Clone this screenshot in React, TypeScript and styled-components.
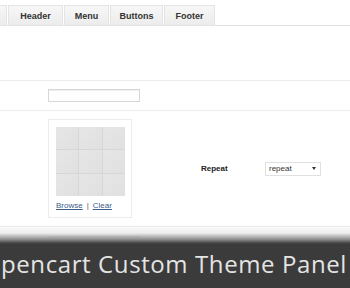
import React from 'react';
import styled, { createGlobalStyle } from 'styled-components';

const GlobalStyle = createGlobalStyle`
  html, body {
    margin: 0;
    padding: 0;
    background: #ffffff;
    overflow: hidden;
  }
  body {
    font-family: 'Liberation Sans', Arial, sans-serif;
  }
`;

const Page = styled.div`
  position: relative;
  width: 350px;
  height: 288px;
  overflow: hidden;
  background: #fff;
`;

const TabBar = styled.div`
  display: flex;
  margin-top: 5px;
  height: 20px;
  border-bottom: 1px solid #e2e2e2;
  margin-left: -47px;
`;

const Tab = styled.div<{ w: number }>`
  width: ${p => p.w}px;
  box-sizing: border-box;
  display: flex;
  align-items: center;
  justify-content: center;
  margin-right: 1px;
  background: linear-gradient(#f7f7f7, #ececec);
  border: 1px solid #e4e4e4;
  border-bottom: none;
  font-size: 9px;
  font-weight: bold;
  color: #333;
`;

const Form = styled.div`
  display: flex;
  flex-direction: column;
`;

const Row = styled.div<{ h: number; last?: boolean }>`
  display: flex;
  align-items: center;
  height: ${p => p.h}px;
  border-bottom: ${p => (p.last ? 'none' : '1px solid #ececec')};
  padding-left: 48px;
`;

const TextInput = styled.div`
  width: 92px;
  height: 13px;
  box-sizing: border-box;
  border: 1px solid #d6d6d6;
  box-shadow: inset 0 1px 1px #eee;
  background: #fff;
`;

const ImageBox = styled.div`
  width: 84px;
  height: 99px;
  box-sizing: border-box;
  border: 1px solid #ececec;
  padding: 7px 6px 0 7px;
  display: flex;
  flex-direction: column;
  align-items: flex-start;
`;

const Thumb = styled.div`
  width: 69px;
  height: 69px;
  display: grid;
  grid-template-columns: repeat(3, 1fr);
  grid-template-rows: repeat(3, 1fr);
  gap: 1px;
  background: #d6d6d6;
`;

const Cell = styled.div`
  background: linear-gradient(135deg, #e6e6e6, #e0e0e0);
`;

const Links = styled.div`
  margin-top: 5px;
  font-size: 8px;
  color: #555;
  display: flex;
  gap: 4px;
`;

const LinkText = styled.span`
  color: #3b5c8c;
  text-decoration: underline;
`;

const Spacer = styled.div<{ w: number }>`
  width: ${p => p.w}px;
  flex-shrink: 0;
`;

const Label = styled.div`
  font-size: 8px;
  font-weight: bold;
  color: #222;
  width: 64px;
`;

const Select = styled.div`
  width: 56px;
  height: 14px;
  box-sizing: border-box;
  border: 1px solid #e0e0e0;
  display: flex;
  align-items: center;
  justify-content: space-between;
  padding: 0 4px 0 3px;
  font-size: 8px;
  color: #333;
`;

const Caret = styled.span`
  width: 0;
  height: 0;
  border-left: 2.5px solid transparent;
  border-right: 2.5px solid transparent;
  border-top: 3px solid #333;
`;

const Banner = styled.div`
  position: absolute;
  left: 0;
  right: 0;
  bottom: 0;
  height: 64px;
  display: flex;
  flex-direction: column;
`;

const Fade = styled.div`
  height: 20px;
  background: linear-gradient(
    rgba(255, 255, 255, 0),
    rgba(225, 225, 225, 0.6) 45%,
    #8a8a8a 78%,
    #4a4a4a 94%,
    #3c3c3c
  );
`;

const Title = styled.div`
  flex: 1;
  background: #3b3b3b;
  color: #e4e4e4;
  font-family: 'Open Sans', 'DejaVu Sans', sans-serif;
  font-size: 24px;
  letter-spacing: 0.6px;
  white-space: nowrap;
  display: flex;
  align-items: center;
  justify-content: flex-end;
  padding-right: 3px;
  padding-bottom: 5px;
`;

const tabs = [
  { name: '', w: 54 },
  { name: 'Header', w: 55 },
  { name: 'Menu', w: 45 },
  { name: 'Buttons', w: 53 },
  { name: 'Footer', w: 51 },
];

export default function App() {
  return (
    <Page>
      <GlobalStyle />
      <TabBar>
        {tabs.map((t, i) => (
          <Tab key={i} w={t.w}>{t.name}</Tab>
        ))}
      </TabBar>
      <Form>
        <Row h={54} />
        <Row h={29}>
          <TextInput />
        </Row>
        <Row h={115}>
          <ImageBox>
            <Thumb>
              {Array.from({ length: 9 }).map((_, i) => (
                <Cell key={i} />
              ))}
            </Thumb>
            <Links>
              <LinkText>Browse</LinkText>|<LinkText>Clear</LinkText>
            </Links>
          </ImageBox>
          <Spacer w={69} />
          <Label>Repeat</Label>
          <Select>
            repeat
            <Caret />
          </Select>
        </Row>
        <Row h={30} last>
          <TextInput />
        </Row>
      </Form>
      <Banner>
        <Fade />
        <Title>Opencart Custom Theme Panel</Title>
      </Banner>
    </Page>
  );
}
